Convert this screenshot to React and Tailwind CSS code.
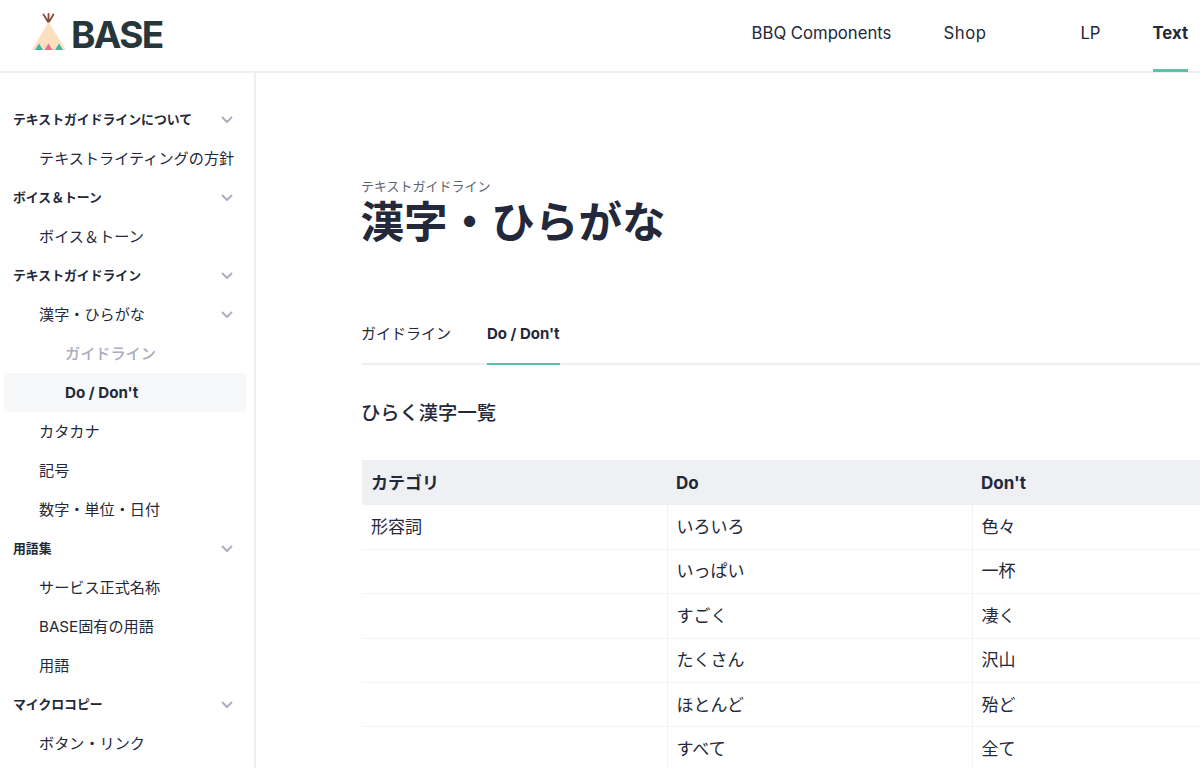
import React from "react";

const font = "font-['Inter','Noto_Sans_CJK_JP',sans-serif]";

const sideItems = [
  { label: "テキストガイドラインについて", level: 0, arrow: true },
  { label: "テキストライティングの方針", level: 1 },
  { label: "ボイス＆トーン", level: 0, arrow: true },
  { label: "ボイス＆トーン", level: 1 },
  { label: "テキストガイドライン", level: 0, arrow: true },
  { label: "漢字・ひらがな", level: 1, arrow: true },
  { label: "ガイドライン", level: 2, muted: true },
  { label: "Do / Don't", level: 2, active: true },
  { label: "カタカナ", level: 1 },
  { label: "記号", level: 1 },
  { label: "数字・単位・日付", level: 1 },
  { label: "用語集", level: 0, arrow: true },
  { label: "サービス正式名称", level: 1 },
  { label: "BASE固有の用語", level: 1 },
  { label: "用語", level: 1 },
  { label: "マイクロコピー", level: 0, arrow: true },
  { label: "ボタン・リンク", level: 1 },
];

const rows = [
  ["形容詞", "いろいろ", "色々"],
  ["", "いっぱい", "一杯"],
  ["", "すごく", "凄く"],
  ["", "たくさん", "沢山"],
  ["", "ほとんど", "殆ど"],
  ["", "すべて", "全て"],
];

function Chevron() {
  return (
    <svg width="12" height="8" viewBox="0 0 12 8" fill="none" className="shrink-0">
      <path d="M1.5 1.5L6 6L10.5 1.5" stroke="#A9ADBC" strokeWidth="1.8" strokeLinecap="round" strokeLinejoin="round" />
    </svg>
  );
}

function Logo() {
  return (
    <div className="flex items-center gap-[5px]">
      <svg width="34" height="38" viewBox="0 0 34 38" className="mb-[6px] shrink-0">
        <path d="M11.5 1.5L16.5 9.5M16.5 1L16.5 9.5M21.5 1.5L16.5 9.5" stroke="#8A4B3F" strokeWidth="1.8" strokeLinecap="round" />
        <path d="M16.5 9L34 37H0Z" fill="#FBDFC0" />
        <path d="M3 37L7 30.5L11 37Z" fill="#3EB5A8" />
        <path d="M12.5 37L16.5 30.5L20.5 37Z" fill="#EF6C83" />
        <path d="M23 37L27 30.5L31 37Z" fill="#3EB5A8" />
      </svg>
      <span className="text-[37px] leading-none font-bold tracking-[-1.7px] text-[#27363a]">BASE</span>
    </div>
  );
}

export default function App() {
  return (
    <div className={`${font} h-[768px] w-[1200px] overflow-hidden bg-white text-[#23283a]`}>
      <header className="flex h-[73px] items-center justify-between border-b-2 border-[#eeeef3] pl-[32px] pr-3">
        <div className="pb-[2px]">
          <Logo />
        </div>
        <nav className="flex h-full items-center text-[16.7px]">
          <span className="mr-[52px] pb-[3px]">BBQ Components</span>
          <span className="mr-[94px] w-[43px] overflow-hidden whitespace-nowrap pb-[3px] tracking-[0.6px]">Shopify</span>
          <span className="mr-[52px] pb-[3px]">LP</span>
          <span className="relative flex h-full items-center pb-[3px] font-bold">
            Text
            <span className="absolute bottom-[-1px] left-0 h-[3px] w-full bg-[#5cc0ab]" />
          </span>
        </nav>
      </header>

      <div className="flex h-[695px]">
        <aside className="w-[256px] shrink-0 border-r-2 border-[#eeeef3] pl-1 pr-[8px] pt-[27px]">
          {sideItems.map((item, i) => (
            <div
              key={i}
              className={`flex h-[39px] items-center justify-between rounded pr-[13px] ${
                item.level === 0
                  ? "pl-[9px] text-[12.85px] font-bold"
                  : item.level === 1
                    ? "pl-[35px] pt-[1px] text-[15.15px]"
                    : "pl-[61px] pt-[1px] text-[15.15px]"
              } ${item.active ? "bg-[#f7f8fa] font-bold" : ""} ${item.muted ? "font-medium text-[#a9adbc]" : ""}`}
            >
              <span className="whitespace-nowrap">{item.label}</span>
              {item.arrow && <Chevron />}
            </div>
          ))}
        </aside>

        <main className="min-w-0 flex-1 pl-[106px] pt-[105px]">
          <p className="-ml-px text-[13px] leading-4 text-[#5d6272]">テキストガイドライン</p>
          <h1 className="-ml-[1.5px] text-[43.6px] leading-[58px] font-bold">漢字・ひらがな</h1>

          <div className="mt-[63px] flex h-[50px] gap-[36px] border-b-2 border-[#eeeef0] text-[15px] leading-[22px]">
            <span className="-ml-px pt-[8px]">ガイドライン</span>
            <span className="relative pt-[8px] font-bold">
              Do / Don't
              <span className="absolute -bottom-0.5 left-0 h-0.5 w-full bg-[#5cc0ab]" />
            </span>
          </div>

          <h2 className="mt-[36px] -ml-px text-[19.3px] leading-6 font-medium">ひらく漢字一覧</h2>

          <table className="mt-[35px] w-[915px] table-fixed border-collapse text-[17px]">
            <thead>
              <tr className="h-[45px] bg-[#eff0f4] text-left font-bold">
                <th className="w-[305px] pl-[9px] pt-[2px]">カテゴリ</th>
                <th className="w-[305px] pl-[9px] pt-[2px]">Do</th>
                <th className="w-[305px] pl-[9px] pt-[2px]">Don't</th>
              </tr>
            </thead>
            <tbody>
              {rows.map((r, i) => (
                <tr key={i} className="h-[44.4px] border-b border-[#f2f2f5]">
                  <td className="pl-[9px] pt-[1px]">{r[0]}</td>
                  <td className="border-l border-[#f2f2f5] pl-[9px] pt-[1px]">{r[1]}</td>
                  <td className="border-l border-[#f2f2f5] pl-[9px] pt-[1px]">{r[2]}</td>
                </tr>
              ))}
            </tbody>
          </table>
        </main>
      </div>
    </div>
  );
}
